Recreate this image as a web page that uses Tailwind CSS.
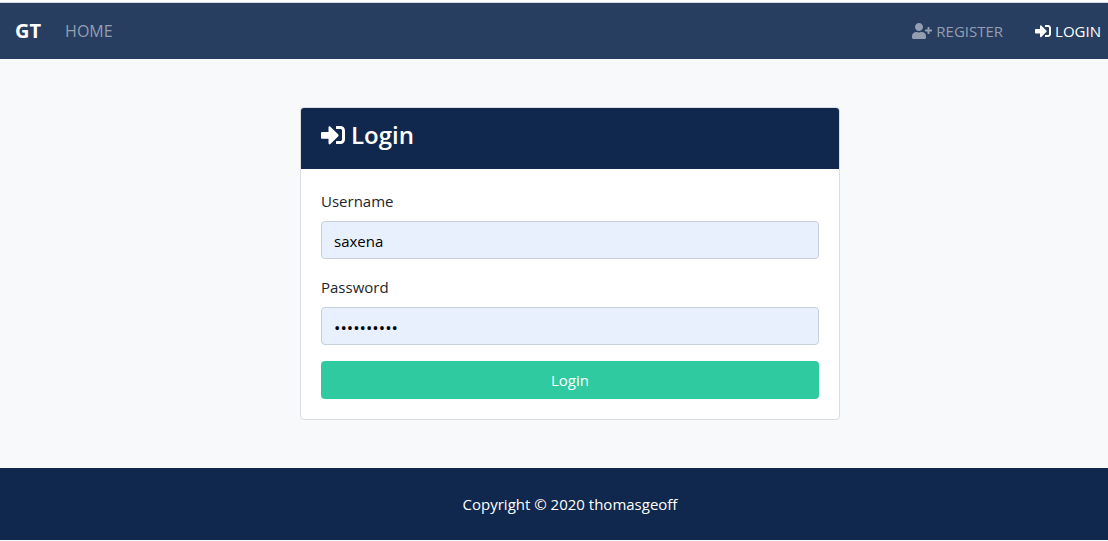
<!DOCTYPE html>
<html lang="en">
<head>
<meta charset="utf-8">
<meta name="viewport" content="width=device-width, initial-scale=1">
<title>Login</title>
<script src="https://cdn.jsdelivr.net/npm/@tailwindcss/browser@4"></script>
</head>
<body class="bg-[#f8f9fb] font-['Segoe_UI','Open_Sans',sans-serif] text-[15px] leading-6 text-[#212529]">
<svg class="hidden" aria-hidden="true">
  <symbol id="sign-in" viewBox="0 0 512 512"><path d="M416 448h-84c-6.600 0-12-5.400-12-12v-40c0-6.600 5.400-12 12-12h84c17.700 0 32-14.300 32-32V160c0-17.700-14.300-32-32-32h-84c-6.600 0-12-5.400-12-12V76c0-6.600 5.400-12 12-12h84c53 0 96 43 96 96v192c0 53-43 96-96 96zm-47-201L201 79c-15-15-41-4.500-41 17v96H24c-13.300 0-24 10.700-24 24v96c0 13.300 10.700 24 24 24h136v96c0 21.500 26 32 41 17l168-168c9.300-9.400 9.300-24.600 0-34z"/></symbol>
  <symbol id="user-plus" viewBox="0 0 640 512"><path d="M624 208h-64v-64c0-8.800-7.200-16-16-16h-32c-8.800 0-16 7.200-16 16v64h-64c-8.800 0-16 7.200-16 16v32c0 8.800 7.200 16 16 16h64v64c0 8.800 7.200 16 16 16h32c8.800 0 16-7.200 16-16v-64h64c8.800 0 16-7.200 16-16v-32c0-8.800-7.200-16-16-16zm-400 48c70.700 0 128-57.300 128-128S294.700 0 224 0 96 57.300 96 128s57.300 128 128 128zm89.600 32h-16.700c-22.200 10.200-46.900 16-72.900 16s-50.600-5.800-72.900-16h-16.700C60.200 288 0 348.200 0 422.400V464c0 26.500 21.500 48 48 48h352c26.500 0 48-21.500 48-48v-41.600c0-74.200-60.200-134.400-134.400-134.400z"/></symbol>
</svg>
<header class="bg-white pt-0.5">
  <nav class="flex items-center border-t border-[#d5dbe4] bg-[#283e60] py-4 pr-[7px] pl-[15px]">
    <a href="#" class="mr-6 text-xl leading-6 font-bold text-white">GT</a>
    <a href="#" class="text-base leading-6 text-[#939fb0]">HOME</a>
    <div class="ml-auto flex items-center gap-8">
      <a href="#" class="flex items-center gap-1 text-[#939fb0]"><svg class="h-4 w-5 fill-current" aria-hidden="true"><use href="#user-plus"/></svg>REGISTER</a>
      <a href="#" class="flex items-center gap-1 text-white"><svg class="size-4 fill-current" aria-hidden="true"><use href="#sign-in"/></svg>LOGIN</a>
    </div>
  </nav>
</header>
<main class="py-12 pl-8">
  <section class="mx-auto w-full max-w-[540px] rounded border border-[#dadde1] bg-white">
    <div class="rounded-t-[3px] bg-[#10284d] px-5 pt-3 pb-5">
      <h1 class="flex items-center gap-1.5 text-2xl leading-[29px] font-semibold text-white"><svg class="size-6 fill-current" aria-hidden="true"><use href="#sign-in"/></svg>Login</h1>
    </div>
    <form class="flex flex-col gap-4 p-5">
      <div class="flex flex-col gap-2">
        <label for="username">Username</label>
        <input id="username" type="text" value="saxena" class="h-[38px] w-full rounded border border-[#c8d0da] bg-[#e8f0fe] px-3 pt-0.5 text-black">
      </div>
      <div class="flex flex-col gap-2">
        <label for="password">Password</label>
        <input id="password" type="password" value="abcdefghij" class="h-[38px] w-full rounded border border-[#c8d0da] bg-[#e8f0fe] px-3 pt-0.5 text-[17px] text-black">
      </div>
      <button type="button" class="h-[38px] w-full rounded bg-[#30caa0] text-white">Login</button>
    </form>
  </section>
</main>
<footer class="bg-[#10284d] py-6 pl-8 text-center text-white">Copyright © 2020 thomasgeoff</footer>
</body>
</html>
